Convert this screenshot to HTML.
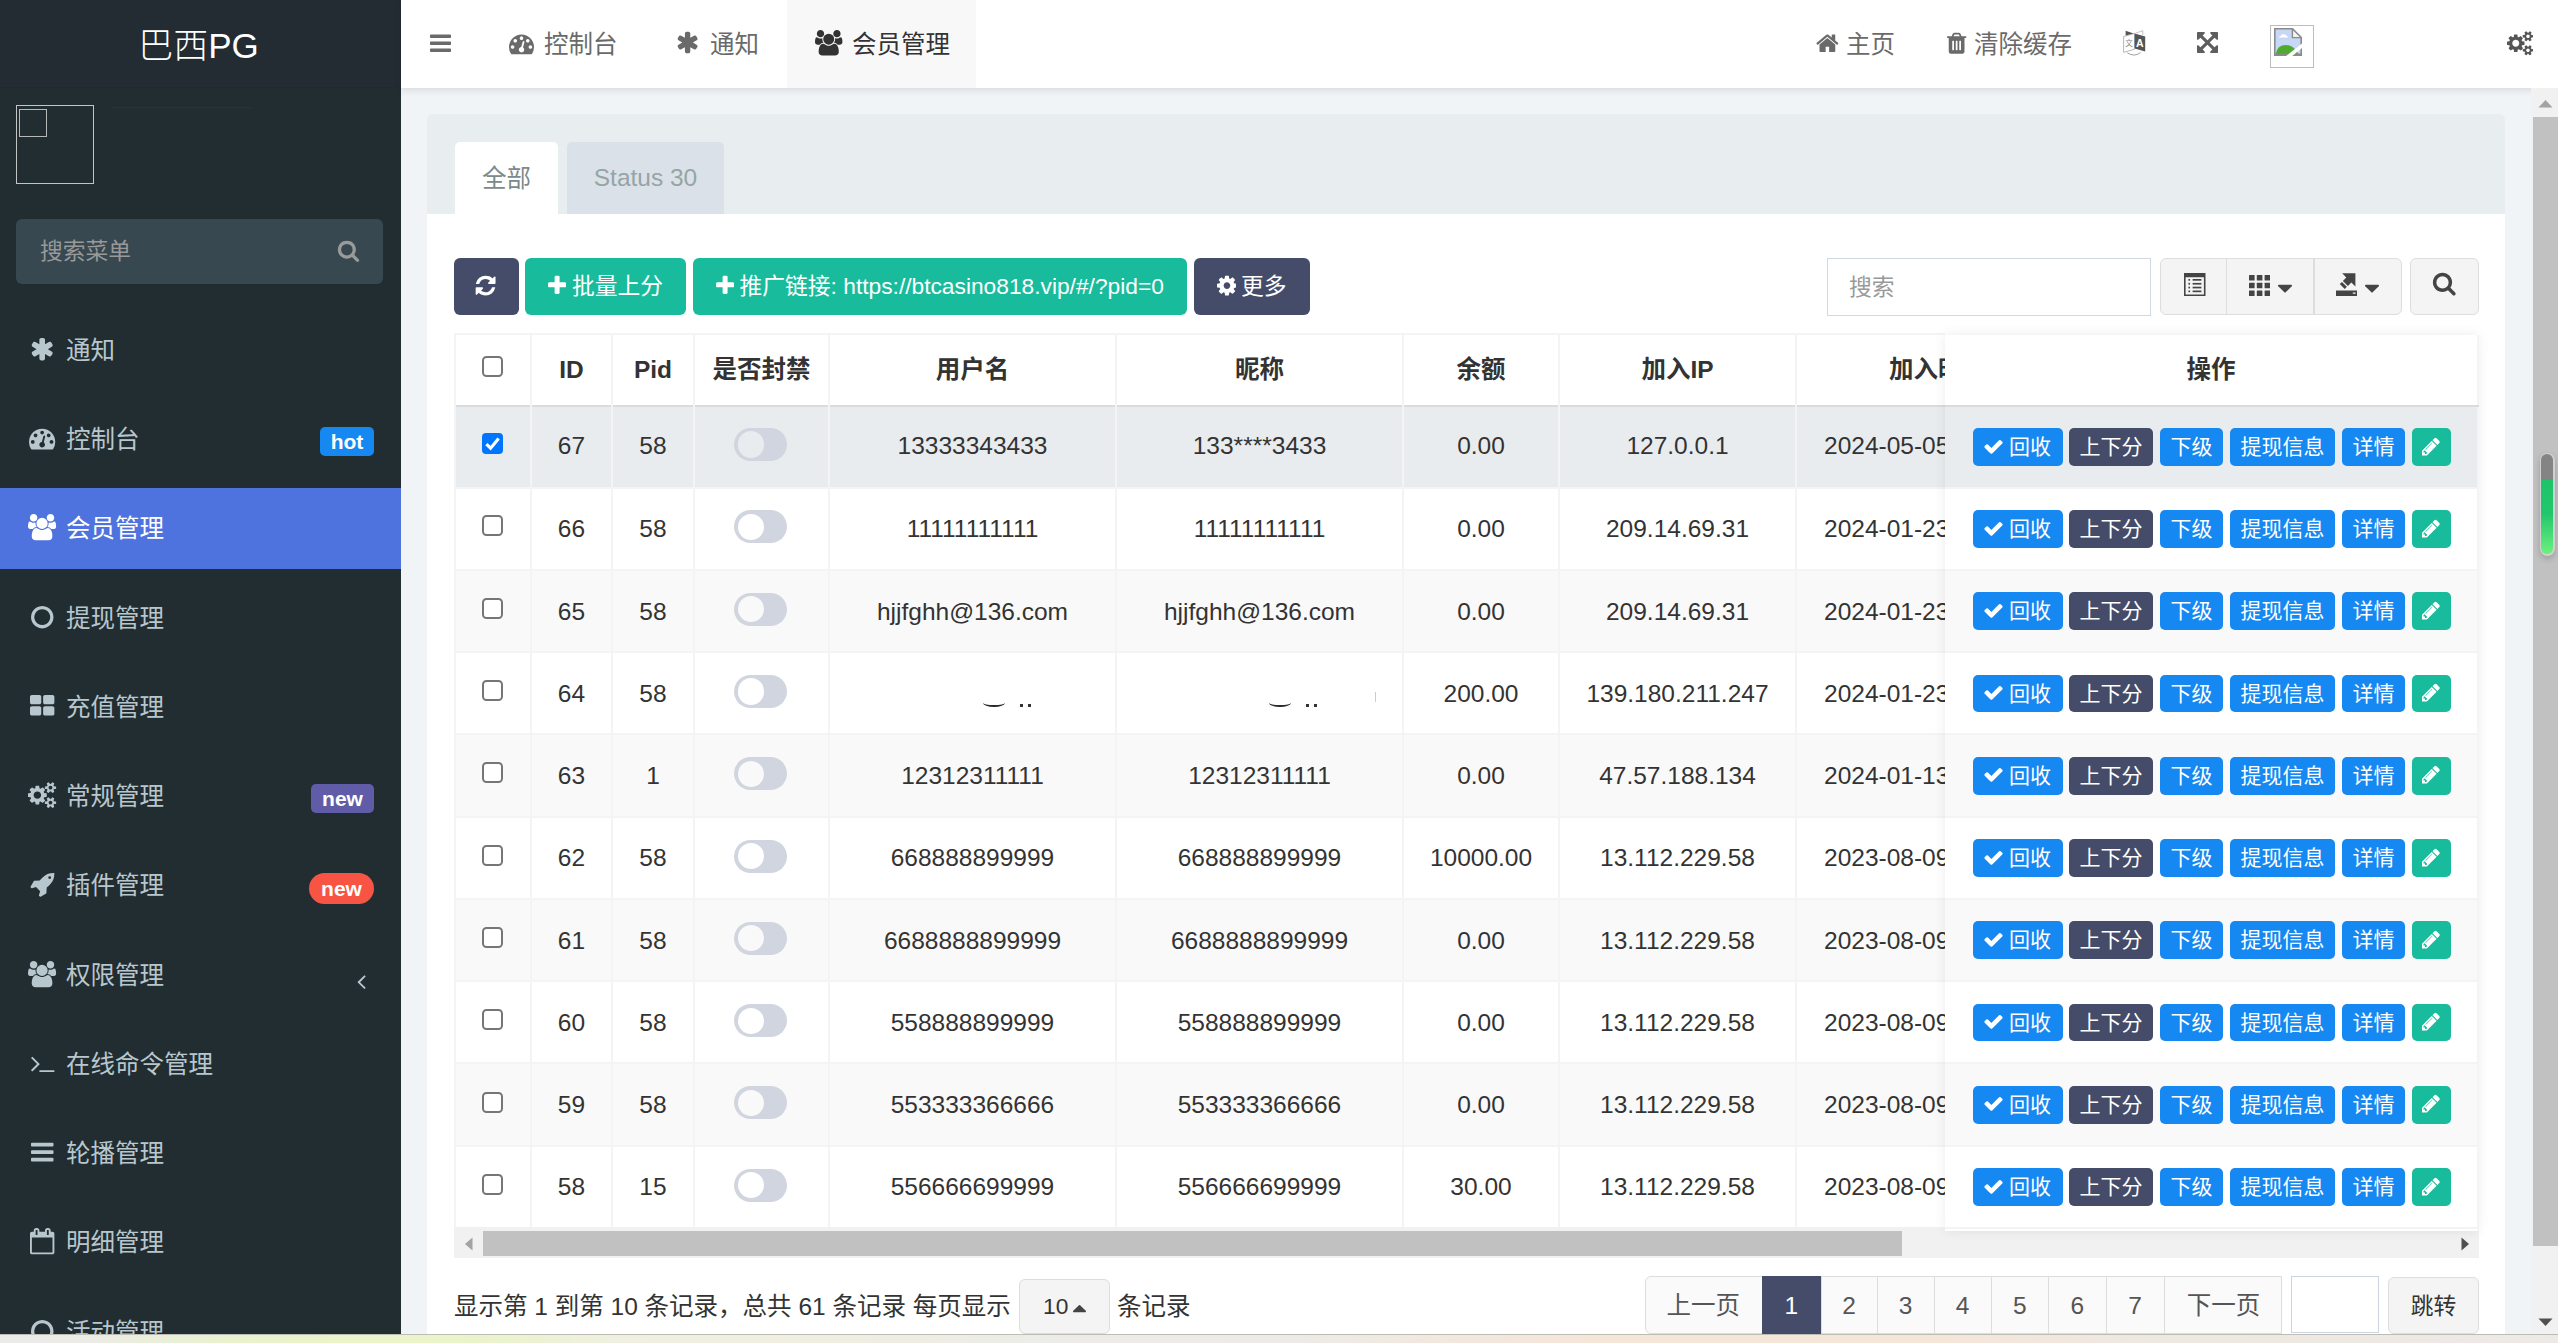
<!DOCTYPE html>
<html lang="zh-CN">
<head>
<meta charset="utf-8">
<title>巴西PG</title>
<style>
*{box-sizing:border-box;margin:0;padding:0}
html,body{width:2558px;height:1343px;overflow:hidden;background:#f1f4f6}
body{position:relative;font-family:"Liberation Sans","Noto Sans CJK SC",sans-serif;font-size:24.5px;color:#333;line-height:1}
.abs{position:absolute}
svg{display:block}
/* ---------- sidebar ---------- */
#sidebar{position:absolute;left:0;top:0;width:401px;height:1334px;background:#222d32;overflow:hidden}
#logo{position:absolute;left:0;top:0;width:397px;height:88px;background:#222c32;color:#fff;font-size:35px;font-weight:300;text-align:center;line-height:91px;padding-right:0;border-bottom:1px solid #20292f}
#uimg{position:absolute;left:16px;top:105px;width:78px;height:79px;border:1.5px solid #c4c4c4}
#uimg i{position:absolute;left:2px;top:3px;width:28px;height:28px;border:1.5px solid #b8b8b8;display:block}
#sline{position:absolute;left:112px;top:107px;width:140px;height:1px;background:#273339}
#msearch{position:absolute;left:16px;top:219px;width:367px;height:65px;background:#374850;border-radius:6px;color:#999;font-size:22.75px;line-height:65px;padding-left:24px}
#msearch svg{position:absolute;left:321px;top:20.4px}
.mi{position:absolute;left:0;width:401px;height:81px;color:#b8c7ce;font-size:24.5px;line-height:81px}
.mi.on{background:#4e73df;color:#fff}
.mi .ic{position:absolute;left:0;top:0;width:82px;height:81px}
.mi .ic svg{position:absolute}
.mi .tx{position:absolute;left:66px;top:0.5px;white-space:nowrap}
.lab{position:absolute;height:29px;line-height:29px;border-radius:5px;color:#fff;font-weight:bold;font-size:21px;text-align:center}
/* ---------- header ---------- */
#header{position:absolute;left:401px;top:0;width:2157px;height:88px;background:#fff;box-shadow:0 2px 7px rgba(0,21,41,.12)}
.nt{position:absolute;top:0;height:88px;color:#6a6a6a;font-size:24.5px;line-height:89.5px;white-space:nowrap}
.nt svg{position:absolute}
/* ---------- content ---------- */
#panel{position:absolute;left:427px;top:114px;width:2078px;height:1230px;background:#fff;border-radius:5px 5px 0 0}
#phead{position:absolute;left:0;top:0;width:2078px;height:100px;background:#e8edf0;border-radius:5px 5px 0 0}
.tab{position:absolute;top:28px;height:72px;border-radius:5px 5px 0 0;font-size:24.5px;line-height:70px;text-align:center}
.btn{position:absolute;border-radius:6px;color:#fff;white-space:nowrap}
.tb{top:144px;height:57px;line-height:56px;font-size:22.75px}
.tb svg{position:absolute}
.gbtn{position:absolute;background:#f4f4f4;border:1.5px solid #ddd}
.th,.td{position:absolute;height:40px;line-height:40px;text-align:center;white-space:nowrap}
.th{font-weight:bold}
.rb{position:absolute;height:37.8px;line-height:38.2px;border-radius:5px;color:#fff;text-align:center;white-space:nowrap;font-size:21px}
</style>
</head>
<body>
<div id="sidebar">
<div id="logo">巴西PG</div>
<div id="uimg"><i></i></div><div id="sline"></div>
<div id="msearch">搜索菜单<svg width="21.36" height="23.00" viewBox="0 0 1664 1792" style="overflow:visible"><path fill="#9a9a9a" fill-rule="evenodd" d="M1216 832q0-185-131.500-316.500t-316.500-131.500-316.500 131.500-131.500 316.500 131.500 316.500 316.500 131.500 316.500-131.500 131.500-316.500zM1728 1664q0 52-38 90t-90 38q-54 0-90-38l-343-342q-179 124-399 124-143 0-273.500-55.500t-225-150-150-225-55.500-273.500 55.500-273.500 150-225 225-150 273.500-55.500 273.500 55.500 225 150 150 225 55.500 273.500q0 220-124 399l343 343q37 37 37 90z"/></svg></div>
<div class="mi" style="top:309.30px"><span class="ic"><svg width="24.38" height="26.25" viewBox="0 0 1664 1792" style="left:30.01px;top:26.6px;overflow:visible"><path fill="#b8c7ce" fill-rule="evenodd" d="M1482 1050q46 26 59.500 77.500t-12.500 97.500l-64 110q-26 46-77.500 59.500t-97.500-12.500l-266-153v307q0 52-38 90t-90 38h-128q-52 0-90-38t-38-90v-307l-266 153q-46 26-97.500 12.500t-77.500-59.500l-64-110q-26-46-12.500-97.500t59.500-77.500l266-154-266-154q-46-26-59.500-77.500t12.500-97.500l64-110q26-46 77.500-59.500t97.500 12.500l266 153v-307q0-52 38-90t90-38h128q52 0 90 38t38 90v307l266-153q46-26 97.500-12.500t77.500 59.500l64 110q26 46 12.500 97.500t-59.500 77.500l-266 154z"/></svg></span><span class="tx">通知</span></div>
<div class="mi" style="top:398.55px"><span class="ic"><svg width="26.25" height="26.25" viewBox="0 0 1792 1792" style="left:29.08px;top:26.6px;overflow:visible"><path fill="#b8c7ce" fill-rule="evenodd" d="M384 1152q0-53-37.500-90.500t-90.500-37.500-90.500 37.500-37.500 90.500 37.500 90.500 90.500 37.500 90.500-37.500 37.500-90.500zM576 704q0-53-37.500-90.500t-90.500-37.500-90.500 37.500-37.500 90.500 37.500 90.500 90.500 37.500 90.500-37.500 37.500-90.500zM1004 1185l101-382q6-26-7.500-48.500t-38.500-29.500-48 6.500-30 39.500l-101 382q-60 5-107 43.500t-63 98.500q-20 77 20 146t117 89 146-20 89-117q16-60-6-117t-72-91zM1664 1152q0-53-37.500-90.500t-90.500-37.500-90.500 37.500-37.500 90.500 37.500 90.500 90.500 37.500 90.500-37.500 37.500-90.500zM1024 512q0-53-37.500-90.500t-90.500-37.500-90.500 37.500-37.500 90.500 37.500 90.500 90.500 37.500 90.500-37.500 37.500-90.500zM1472 704q0-53-37.500-90.500t-90.500-37.500-90.500 37.500-37.500 90.500 37.500 90.500 90.500 37.500 90.500-37.500 37.500-90.500zM1792 1152q0 261-141 483-19 29-54 29h-1402q-35 0-54-29-141-221-141-483 0-182 71-348t191-286 286-191 348-71 348 71 286 191 191 286 71 348z"/></svg></span><span class="tx">控制台</span><span class="lab" style="left:320px;top:28px;width:54px;background:#1688f1">hot</span></div>
<div class="mi on" style="top:487.80px"><span class="ic"><svg width="28.12" height="26.25" viewBox="0 0 1920 1792" style="left:28.14px;top:26.6px;overflow:visible"><path fill="#fff" fill-rule="evenodd" d="M593 896q-162 5-265 128h-134q-82 0-138-40.500t-56-118.500q0-353 124-353 6 0 43.500 21t97.500 42.500 119 21.500q67 0 133-23-5 37-5 66 0 139 81 256zM1664 1533q0 120-73 189.500t-194 69.500h-874q-121 0-194-69.500t-73-189.500q0-53 3.500-103.500t14-109 26.500-108.500 43-97.500 62-81 85.500-53.500 111.500-20q10 0 43 21.500t73 48 107 48 135 21.500 135-21.500 107-48 73-48 43-21.500q61 0 111.500 20t85.500 53.500 62 81 43 97.500 26.500 108.500 14 109 3.500 103.500zM640 256q0 106-75 181t-181 75-181-75-75-181 75-181 181-75 181 75 75 181zM1344 640q0 159-112.500 271.500t-271.500 112.500-271.500-112.500-112.500-271.500 112.500-271.500 271.500-112.500 271.500 112.500 112.500 271.500zM1920 865q0 78-56 118.500t-138 40.500h-134q-103-123-265-128 81-117 81-256 0-29-5-66 66 23 133 23 59 0 119-21.500t97.500-42.500 43.500-21q124 0 124 353zM1792 256q0 106-75 181t-181 75-181-75-75-181 75-181 181-75 181 75 75 181z"/></svg></span><span class="tx">会员管理</span></div>
<div class="mi" style="top:577.05px"><span class="ic"><svg width="22.50" height="26.25" viewBox="0 0 1536 1792" style="left:30.95px;top:26.6px;overflow:visible"><path fill="#b8c7ce" fill-rule="evenodd" d="M768 352q-148 0-273 73t-198 198-73 273 73 273 198 198 273 73 273-73 198-198 73-273-73-273-198-198-273-73zM1536 896q0 209-103 385.500t-279.500 279.500-385.500 103-385.500-103-279.500-279.500-103-385.500 103-385.500 279.500-279.500 385.500-103 385.500 103 279.500 279.500 103 385.500z"/></svg></span><span class="tx">提现管理</span></div>
<div class="mi" style="top:666.30px"><span class="ic"><svg width="24.38" height="26.25" viewBox="0 0 1664 1792" style="left:30.01px;top:26.6px;overflow:visible"><path fill="#b8c7ce" fill-rule="evenodd" d="M768 1024v384q0 52-38 90t-90 38h-512q-52 0-90-38t-38-90v-384q0-52 38-90t90-38h512q52 0 90 38t38 90zM768 256v384q0 52-38 90t-90 38h-512q-52 0-90-38t-38-90v-384q0-52 38-90t90-38h512q52 0 90 38t38 90zM1664 1024v384q0 52-38 90t-90 38h-512q-52 0-90-38t-38-90v-384q0-52 38-90t90-38h512q52 0 90 38t38 90zM1664 256v384q0 52-38 90t-90 38h-512q-52 0-90-38t-38-90v-384q0-52 38-90t90-38h512q52 0 90 38t38 90z"/></svg></span><span class="tx">充值管理</span></div>
<div class="mi" style="top:755.55px"><span class="ic"><svg width="28.12" height="26.25" viewBox="0 0 1920 1792" style="left:28.14px;top:26.6px;overflow:visible"><path fill="#b8c7ce" fill-rule="evenodd" d="M896 896q0-106-75-181t-181-75-181 75-75 181 75 181 181 75 181-75 75-181zM1664 1408q0-52-38-90t-90-38-90 38-38 90q0 53 37.500 90.500t90.500 37.500 90.500-37.500 37.500-90.500zM1664 384q0-52-38-90t-90-38-90 38-38 90q0 53 37.500 90.500t90.500 37.500 90.500-37.500 37.500-90.500zM1280 805v185q0 10-7 19.500t-16 10.500l-155 24q-11 35-32 76 34 48 90 115 7 11 7 20 0 12-7 19-23 30-82.500 89.500t-78.500 59.500q-11 0-21-7l-115-90q-37 19-77 31-11 108-23 155-7 24-30 24h-186q-11 0-20-7.500t-10-17.500l-23-153q-34-10-75-31l-118 89q-7 7-20 7-11 0-21-8-144-133-144-160 0-9 7-19 10-14 41-53t47-61q-23-44-35-82l-152-24q-10-1-17-9.500t-7-19.500v-185q0-10 7-19.500t16-10.500l155-24q11-35 32-76-34-48-90-115-7-11-7-20 0-12 7-20 22-30 82-89t79-59q11 0 21 7l115 90q34-18 77-32 11-108 23-154 7-24 30-24h186q11 0 20 7.500t10 17.500l23 153q34 10 75 31l118-89q8-7 20-7 11 0 21 8 144 133 144 160 0 8-7 19-12 16-42 54t-45 60q23 48 34 82l152 23q10 2 17 10.500t7 19.500zM1920 1338v140q0 16-149 31-12 27-30 52 51 113 51 138 0 4-4 7-122 71-124 71-8 0-46-47t-52-68q-20 2-30 2t-30-2q-14 21-52 68t-46 47q-2 0-124-71-4-3-4-7 0-25 51-138-18-25-30-52-149-15-149-31v-140q0-16 149-31 13-29 30-52-51-113-51-138 0-4 4-7 4-2 35-20t59-34 30-16q8 0 46 46.500t52 67.500q20-2 30-2t30 2q51-71 92-112l6-2q4 0 124 70 4 3 4 7 0 25-51 138 17 23 30 52 149 15 149 31zM1920 314v140q0 16-149 31-12 27-30 52 51 113 51 138 0 4-4 7-122 71-124 71-8 0-46-47t-52-68q-20 2-30 2t-30-2q-14 21-52 68t-46 47q-2 0-124-71-4-3-4-7 0-25 51-138-18-25-30-52-149-15-149-31v-140q0-16 149-31 13-29 30-52-51-113-51-138 0-4 4-7 4-2 35-20t59-34 30-16q8 0 46 46.500t52 67.500q20-2 30-2t30 2q51-71 92-112l6-2q4 0 124 70 4 3 4 7 0 25-51 138 17 23 30 52 149 15 149 31z"/></svg></span><span class="tx">常规管理</span><span class="lab" style="left:311px;top:28.5px;width:63px;background:#605ca8">new</span></div>
<div class="mi" style="top:844.80px"><span class="ic"><svg width="24.38" height="26.25" viewBox="0 0 1664 1792" style="left:30.01px;top:26.6px;overflow:visible"><path fill="#b8c7ce" fill-rule="evenodd" d="M1440 448q0-40-28-68t-68-28-68 28-28 68 28 68 68 28 68-28 28-68zM1664 160q0 249-75.500 430.500t-253.500 360.500q-81 80-195 176l-20 379q-2 16-16 26l-384 224q-7 4-16 4-12 0-23-9l-64-64q-13-14-8-32l85-276-281-281-276 85q-3 1-9 1-14 0-23-9l-64-64q-17-19-5-39l224-384q10-14 26-16l379-20q96-114 176-195 188-187 358-258t431-71q14 0 24 9.500t10 22.500z"/></svg></span><span class="tx">插件管理</span><span class="lab" style="left:309px;top:28.5px;width:65px;height:31px;line-height:31px;border-radius:16px;background:#f75444">new</span></div>
<div class="mi" style="top:934.05px"><span class="ic"><svg width="28.12" height="26.25" viewBox="0 0 1920 1792" style="left:28.14px;top:26.6px;overflow:visible"><path fill="#b8c7ce" fill-rule="evenodd" d="M593 896q-162 5-265 128h-134q-82 0-138-40.500t-56-118.500q0-353 124-353 6 0 43.500 21t97.500 42.500 119 21.500q67 0 133-23-5 37-5 66 0 139 81 256zM1664 1533q0 120-73 189.500t-194 69.500h-874q-121 0-194-69.500t-73-189.500q0-53 3.500-103.500t14-109 26.500-108.500 43-97.500 62-81 85.500-53.500 111.500-20q10 0 43 21.500t73 48 107 48 135 21.500 135-21.500 107-48 73-48 43-21.500q61 0 111.500 20t85.500 53.500 62 81 43 97.500 26.500 108.500 14 109 3.500 103.500zM640 256q0 106-75 181t-181 75-181-75-75-181 75-181 181-75 181 75 75 181zM1344 640q0 159-112.500 271.500t-271.500 112.500-271.500-112.500-112.500-271.500 112.500-271.500 271.500-112.500 271.500 112.500 112.500 271.500zM1920 865q0 78-56 118.500t-138 40.500h-134q-103-123-265-128 81-117 81-256 0-29-5-66 66 23 133 23 59 0 119-21.500t97.500-42.500 43.500-21q124 0 124 353zM1792 256q0 106-75 181t-181 75-181-75-75-181 75-181 181-75 181 75 75 181z"/></svg></span><span class="tx">权限管理</span><svg width="8.75" height="24.50" viewBox="0 0 640 1792" style="position:absolute;left:357px;top:35px"><path fill="#b8c7ce" fill-rule="evenodd" d="M627 544q0 13-10 23l-393 393 393 393q10 10 10 23t-10 23l-50 50q-10 10-23 10t-23-10l-466-466q-10-10-10-23t10-23l466-466q10-10 23-10t23 10l50 50q10 10 10 23z"/></svg></div>
<div class="mi" style="top:1023.30px"><span class="ic"><svg width="24.38" height="26.25" viewBox="0 0 1664 1792" style="left:30.01px;top:26.6px;overflow:visible"><path fill="#b8c7ce" fill-rule="evenodd" d="M649 983l-466 466q-10 10-23 10t-23-10l-50-50q-10-10-10-23t10-23l393-393-393-393q-10-10-10-23t10-23l50-50q10-10 23-10t23 10l466 466q10 10 10 23t-10 23zM1664 1408v64q0 14-9 23t-23 9h-960q-14 0-23-9t-9-23v-64q0-14 9-23t23-9h960q14 0 23 9t9 23z"/></svg></span><span class="tx">在线命令管理</span></div>
<div class="mi" style="top:1112.55px"><span class="ic"><svg width="22.50" height="26.25" viewBox="0 0 1536 1792" style="left:30.95px;top:26.6px;overflow:visible"><path fill="#b8c7ce" fill-rule="evenodd" d="M1536 1344v128q0 26-19 45t-45 19h-1408q-26 0-45-19t-19-45v-128q0-26 19-45t45-19h1408q26 0 45 19t19 45zM1536 832v128q0 26-19 45t-45 19h-1408q-26 0-45-19t-19-45v-128q0-26 19-45t45-19h1408q26 0 45 19t19 45zM1536 320v128q0 26-19 45t-45 19h-1408q-26 0-45-19t-19-45v-128q0-26 19-45t45-19h1408q26 0 45 19t19 45z"/></svg></span><span class="tx">轮播管理</span></div>
<div class="mi" style="top:1201.80px"><span class="ic"><svg width="24.38" height="26.25" viewBox="0 0 1664 1792" style="left:30.01px;top:26.6px;overflow:visible"><path fill="#b8c7ce" fill-rule="evenodd" d="M128 1664h1408v-1024h-1408v1024zM512 448v-288q0-14-9-23t-23-9h-64q-14 0-23 9t-9 23v288q0 14 9 23t23 9h64q14 0 23-9t9-23zM1280 448v-288q0-14-9-23t-23-9h-64q-14 0-23 9t-9 23v288q0 14 9 23t23 9h64q14 0 23-9t9-23zM1664 384v1280q0 52-38 90t-90 38h-1408q-52 0-90-38t-38-90v-1280q0-52 38-90t90-38h128v-96q0-66 47-113t113-47h64q66 0 113 47t47 113v96h384v-96q0-66 47-113t113-47h64q66 0 113 47t47 113v96h128q52 0 90 38t38 90z"/></svg></span><span class="tx">明细管理</span></div>
<div class="mi" style="top:1291.05px"><span class="ic"><svg width="22.50" height="26.25" viewBox="0 0 1536 1792" style="left:30.95px;top:26.6px;overflow:visible"><path fill="#b8c7ce" fill-rule="evenodd" d="M768 352q-148 0-273 73t-198 198-73 273 73 273 198 198 273 73 273-73 198-198 73-273-73-273-198-198-273-73zM1536 896q0 209-103 385.500t-279.500 279.500-385.500 103-385.500-103-279.500-279.500-103-385.500 103-385.500 279.500-279.500 385.500-103 385.500 103 279.500 279.500 103 385.500z"/></svg></span><span class="tx">活动管理</span></div>
</div>

<div id="header">
<div class="nt" style="left:0;width:80px"><svg width="21.00" height="24.50" viewBox="0 0 1536 1792" style="left:28.5px;top:31px"><path fill="#6a6a6a" fill-rule="evenodd" d="M1536 1344v128q0 26-19 45t-45 19h-1408q-26 0-45-19t-19-45v-128q0-26 19-45t45-19h1408q26 0 45 19t19 45zM1536 832v128q0 26-19 45t-45 19h-1408q-26 0-45-19t-19-45v-128q0-26 19-45t45-19h1408q26 0 45 19t19 45zM1536 320v128q0 26-19 45t-45 19h-1408q-26 0-45-19t-19-45v-128q0-26 19-45t45-19h1408q26 0 45 19t19 45z"/></svg></div>
<div class="nt" style="left:79px"><svg width="25.00" height="25.00" viewBox="0 0 1792 1792" style="left:28.8px;top:30.8px"><path fill="#6a6a6a" fill-rule="evenodd" d="M384 1152q0-53-37.500-90.500t-90.500-37.500-90.500 37.500-37.500 90.500 37.500 90.500 90.500 37.500 90.500-37.500 37.500-90.500zM576 704q0-53-37.500-90.500t-90.500-37.500-90.500 37.500-37.500 90.500 37.500 90.500 90.500 37.500 90.500-37.500 37.500-90.500zM1004 1185l101-382q6-26-7.500-48.500t-38.500-29.500-48 6.500-30 39.500l-101 382q-60 5-107 43.500t-63 98.500q-20 77 20 146t117 89 146-20 89-117q16-60-6-117t-72-91zM1664 1152q0-53-37.500-90.500t-90.500-37.500-90.500 37.500-37.500 90.500 37.500 90.500 90.500 37.500 90.500-37.500 37.500-90.500zM1024 512q0-53-37.500-90.500t-90.500-37.500-90.500 37.500-37.500 90.500 37.500 90.500 90.500 37.500 90.500-37.500 37.500-90.500zM1472 704q0-53-37.500-90.500t-90.500-37.500-90.500 37.500-37.500 90.500 37.500 90.500 90.500 37.500 90.500-37.500 37.500-90.500zM1792 1152q0 261-141 483-19 29-54 29h-1402q-35 0-54-29-141-221-141-483 0-182 71-348t191-286 286-191 348-71 348 71 286 191 191 286 71 348z"/></svg><span style="position:absolute;left:64px">控制台</span></div>
<div class="nt" style="left:249px"><svg width="23.21" height="25.00" viewBox="0 0 1664 1792" style="left:25.8px;top:29.8px"><path fill="#6a6a6a" fill-rule="evenodd" d="M1482 1050q46 26 59.500 77.500t-12.500 97.500l-64 110q-26 46-77.500 59.500t-97.500-12.500l-266-153v307q0 52-38 90t-90 38h-128q-52 0-90-38t-38-90v-307l-266 153q-46 26-97.500 12.500t-77.500-59.500l-64-110q-26-46-12.500-97.500t59.500-77.500l266-154-266-154q-46-26-59.500-77.500t12.500-97.500l64-110q26-46 77.500-59.500t97.500 12.500l266 153v-307q0-52 38-90t90-38h128q52 0 90 38t38 90v307l266-153q46-26 97.500-12.500t77.500 59.500l64 110q26 46 12.500 97.500t-59.500 77.500l-266 154z"/></svg><span style="position:absolute;left:60px">通知</span></div>
<div class="nt" style="left:386px;width:189px;background:#f8f8f8;color:#333"><svg width="27.43" height="25.60" viewBox="0 0 1920 1792" style="left:28.4px;top:30.1px"><path fill="#333" fill-rule="evenodd" d="M593 896q-162 5-265 128h-134q-82 0-138-40.500t-56-118.500q0-353 124-353 6 0 43.500 21t97.500 42.500 119 21.500q67 0 133-23-5 37-5 66 0 139 81 256zM1664 1533q0 120-73 189.500t-194 69.500h-874q-121 0-194-69.500t-73-189.500q0-53 3.500-103.500t14-109 26.500-108.500 43-97.500 62-81 85.500-53.500 111.500-20q10 0 43 21.500t73 48 107 48 135 21.500 135-21.500 107-48 73-48 43-21.500q61 0 111.500 20t85.500 53.500 62 81 43 97.500 26.500 108.500 14 109 3.500 103.500zM640 256q0 106-75 181t-181 75-181-75-75-181 75-181 181-75 181 75 75 181zM1344 640q0 159-112.500 271.500t-271.500 112.500-271.500-112.500-112.500-271.500 112.500-271.500 271.500-112.500 271.500 112.500 112.500 271.500zM1920 865q0 78-56 118.500t-138 40.500h-134q-103-123-265-128 81-117 81-256 0-29-5-66 66 23 133 23 59 0 119-21.500t97.500-42.500 43.500-21q124 0 124 353zM1792 256q0 106-75 181t-181 75-181-75-75-181 75-181 181-75 181 75 75 181z"/></svg><span style="position:absolute;left:65px">会员管理</span></div>
<div class="nt" style="left:1399px"><svg width="22.75" height="24.50" viewBox="0 0 1664 1792" style="left:16px;top:31px;overflow:visible"><path fill="#6a6a6a" fill-rule="evenodd" d="M1408 992v480q0 26-19 45t-45 19h-384v-384h-256v384h-384q-26 0-45-19t-19-45v-480q0-1 .5-3t.5-3l575-474 575 474q1 2 1 6zM1631 923l-62 74q-8 9-21 11h-3q-13 0-21-7l-692-577-692 577q-12 8-24 7-13-2-21-11l-62-74q-8-10-7-23.500t11-21.500l719-599q32-26 76-26t76 26l244 204v-195q0-14 9-23t23-9h192q14 0 23 9t9 23v408l219 182q10 8 11 21.500t-7 23.500z"/></svg><span style="position:absolute;left:46px">主页</span></div>
<div class="nt" style="left:1529px"><svg width="19.25" height="24.50" viewBox="0 0 1408 1792" style="overflow:visible;position:absolute;left:17px;top:30.9px"><path fill="#6a6a6a" fill-rule="evenodd" d="M32 384H1376Q1408 384 1408 416V480Q1408 512 1376 512H1280V1460Q1280 1664 1120 1664H288Q128 1664 128 1460V512H32Q0 512 0 480V416Q0 384 32 384ZM341 384L411 217Q450 128 555 128H853Q958 128 997 217L1067 384H928L880 267Q873 258 863 256H545Q535 258 528 267L480 384ZM416 704H480Q512 704 512 736V1376Q512 1408 480 1408H416Q384 1408 384 1376V736Q384 704 416 704ZM672 704H736Q768 704 768 736V1376Q768 1408 736 1408H672Q640 1408 640 1376V736Q640 704 672 704ZM928 704H992Q1024 704 1024 736V1376Q1024 1408 992 1408H928Q896 1408 896 1376V736Q896 704 928 704Z"/></svg><span style="position:absolute;left:44px">清除缓存</span></div>
<div class="nt" style="left:1721px"><svg width="24" height="27" viewBox="0 0 24 27" style="overflow:visible;left:0.5px;top:30px"><path d="M0.6 6.6L11.6 3.4V19.2L0.6 22.4Z" fill="#fff" stroke="#9a9a9a" stroke-width="0.7"/><path d="M11.6 3.4L22.2 6.6V21.4L11.6 18.4Z" fill="#555"/><path d="M2.6 0.8L10.6 3.4L2.6 5.6Z" fill="#555"/><path d="M12.6 3.2L19.8 0.6V5.2" fill="none" stroke="#aaa" stroke-width="0.7"/><path d="M4.2 22.8Q11.4 27.4 17.6 22.6" fill="none" stroke="#888" stroke-width="0.8"/><text x="16.9" y="16.6" font-family="Liberation Sans,sans-serif" font-weight="bold" font-size="10.5" fill="#fff" text-anchor="middle">A</text><text x="6.1" y="16.2" font-family="Noto Sans CJK SC,sans-serif" font-size="7.6" fill="#888" text-anchor="middle">文</text></svg></div>
<div class="nt" style="left:1796px"><svg width="21.00" height="24.50" viewBox="0 0 1536 1792" style="left:0;top:32.3px"><path fill="#5e5e5e" fill-rule="evenodd" d="M1283 413l-355 355 355 355 144-144q29-31 70-14 39 17 39 59v448q0 26-19 45t-45 19h-448q-42 0-59-40-17-39 14-69l144-144-355-355-355 355 144 144q31 30 14 69-17 40-59 40h-448q-26 0-45-19t-19-45v-448q0-42 40-59 39-17 69 14l144 144 355-355-355-355-144 144q-19 19-45 19-12 0-24-5-40-17-40-59v-448q0-26 19-45t45-19h448q42 0 59 40 17 39-14 69l-144 144 355 355 355-355-144-144q-31-30-14-69 17-40 59-40h448q26 0 45 19t19 45v448q0 42-39 59-13 5-25 5-26 0-45-19z"/></svg></div>
<div style="position:absolute;left:1869px;top:25px;width:44px;height:43px;border:1.5px solid #bdbdbd"><svg width="28" height="28" viewBox="0 0 28 28" style="position:absolute;left:2.5px;top:1.7px"><path d="M0.8 0.8H18.4L27.2 9.6V27.2H0.8Z" fill="#c6d8f6" stroke="#8a8a8a" stroke-width="1.6"/><path d="M18.4 0.8V9.6H27.2Z" fill="#f4f4f4" stroke="#8a8a8a" stroke-width="1.4"/><path d="M5 9.6Q5 7.8 7 7.8Q8 5.4 10.4 6.4Q12.6 6.2 12.8 8.2Q14.2 8.4 14 9.6Z" fill="#fff"/><path d="M1.6 26.4Q3 17 12 17Q19.5 17 25 26.4Z" fill="#4faa2f"/><path d="M0.8 26.4H27.2" stroke="#8a8a8a" stroke-width="1.6"/><path d="M11.5 28.5L28.5 15.2V19.5L17.6 28.5Z" fill="#fff"/></svg></div>
<div class="nt" style="left:2106px"><svg width="26.25" height="24.50" viewBox="0 0 1920 1792" style="left:0;top:31px"><path fill="#555" fill-rule="evenodd" d="M896 896q0-106-75-181t-181-75-181 75-75 181 75 181 181 75 181-75 75-181zM1664 1408q0-52-38-90t-90-38-90 38-38 90q0 53 37.500 90.500t90.500 37.500 90.500-37.500 37.500-90.500zM1664 384q0-52-38-90t-90-38-90 38-38 90q0 53 37.500 90.500t90.500 37.500 90.500-37.500 37.500-90.500zM1280 805v185q0 10-7 19.500t-16 10.500l-155 24q-11 35-32 76 34 48 90 115 7 11 7 20 0 12-7 19-23 30-82.500 89.500t-78.500 59.500q-11 0-21-7l-115-90q-37 19-77 31-11 108-23 155-7 24-30 24h-186q-11 0-20-7.500t-10-17.500l-23-153q-34-10-75-31l-118 89q-7 7-20 7-11 0-21-8-144-133-144-160 0-9 7-19 10-14 41-53t47-61q-23-44-35-82l-152-24q-10-1-17-9.500t-7-19.500v-185q0-10 7-19.500t16-10.500l155-24q11-35 32-76-34-48-90-115-7-11-7-20 0-12 7-20 22-30 82-89t79-59q11 0 21 7l115 90q34-18 77-32 11-108 23-154 7-24 30-24h186q11 0 20 7.500t10 17.500l23 153q34 10 75 31l118-89q8-7 20-7 11 0 21 8 144 133 144 160 0 8-7 19-12 16-42 54t-45 60q23 48 34 82l152 23q10 2 17 10.500t7 19.500zM1920 1338v140q0 16-149 31-12 27-30 52 51 113 51 138 0 4-4 7-122 71-124 71-8 0-46-47t-52-68q-20 2-30 2t-30-2q-14 21-52 68t-46 47q-2 0-124-71-4-3-4-7 0-25 51-138-18-25-30-52-149-15-149-31v-140q0-16 149-31 13-29 30-52-51-113-51-138 0-4 4-7 4-2 35-20t59-34 30-16q8 0 46 46.500t52 67.500q20-2 30-2t30 2q51-71 92-112l6-2q4 0 124 70 4 3 4 7 0 25-51 138 17 23 30 52 149 15 149 31zM1920 314v140q0 16-149 31-12 27-30 52 51 113 51 138 0 4-4 7-122 71-124 71-8 0-46-47t-52-68q-20 2-30 2t-30-2q-14 21-52 68t-46 47q-2 0-124-71-4-3-4-7 0-25 51-138-18-25-30-52-149-15-149-31v-140q0-16 149-31 13-29 30-52-51-113-51-138 0-4 4-7 4-2 35-20t59-34 30-16q8 0 46 46.500t52 67.500q20-2 30-2t30 2q51-71 92-112l6-2q4 0 124 70 4 3 4 7 0 25-51 138 17 23 30 52 149 15 149 31z"/></svg></div>
</div>

<div id="panel">
<div id="phead"></div>
<div class="tab" style="left:28px;width:103px;background:#fff;color:#7b8a8b;line-height:73px">全部</div>
<div class="tab" style="left:140px;width:157px;background:#dbe1e8;color:#95a5a6;line-height:71px">Status 30</div>
<div class="btn tb" style="left:27px;width:65px;background:#444c69"><svg width="19.89" height="23.20" viewBox="0 0 1536 1792" style="left:20.4px;top:16.3px;overflow:visible"><path fill="#fff" fill-rule="evenodd" d="M1639 1056q0 5-1 7-64 268-268 434.500t-478 166.500q-146 0-282.500-55t-243.500-157l-129 129q-19 19-45 19t-45-19-19-45v-448q0-26 19-45t45-19h448q26 0 45 19t19 45-19 45l-137 137q71 66 161 102t187 36q134 0 250-65t186-179q11-17 53-117 8-23 30-23h192q13 0 22.500 9.500t9.500 22.500zM1664 256v448q0 26-19 45t-45 19h-448q-26 0-45-19t-19-45 19-45l138-138q-148-137-349-137-134 0-250 65t-186 179q-11 17-53 117-8 23-30 23h-199q-13 0-22.500-9.500t-9.500-22.500v-7q65-268 270-434.500t480-166.500q146 0 284 55.500t245 156.500l130-129q19-19 45-19t45 19 19 45z"/></svg></div>
<div class="btn tb" style="left:98px;width:161px;background:#18bc9c"><svg width="18.23" height="23.20" viewBox="0 0 1408 1792" style="left:23px;top:16.2px"><path fill="#fff" fill-rule="evenodd" d="M1408 736v192q0 40-28 68t-68 28h-416v416q0 40-28 68t-68 28h-192q-40 0-68-28t-28-68v-416h-416q-40 0-68-28t-28-68v-192q0-40 28-68t68-28h416v-416q0-40 28-68t68-28h192q40 0 68 28t28 68v416h416q40 0 68 28t28 68z"/></svg><span style="position:absolute;left:47px">批量上分</span></div>
<div class="btn tb" style="left:266px;width:494px;background:#18bc9c"><svg width="18.23" height="23.20" viewBox="0 0 1408 1792" style="left:23px;top:16.2px"><path fill="#fff" fill-rule="evenodd" d="M1408 736v192q0 40-28 68t-68 28h-416v416q0 40-28 68t-68 28h-192q-40 0-68-28t-28-68v-416h-416q-40 0-68-28t-28-68v-192q0-40 28-68t68-28h416v-416q0-40 28-68t68-28h192q40 0 68 28t28 68v416h416q40 0 68 28t28 68z"/></svg><span style="position:absolute;left:46.6px">推广链接: https://btcasino818.vip/#/?pid=0</span></div>
<div class="btn tb" style="left:767px;width:116px;background:#444c69"><svg width="19.89" height="23.20" viewBox="0 0 1536 1792" style="left:22.5px;top:16.3px"><path fill="#fff" fill-rule="evenodd" d="M1024 896q0-106-75-181t-181-75-181 75-75 181 75 181 181 75 181-75 75-181zM1536 787v222q0 12-8 23t-20 13l-185 28q-19 54-39 91 35 50 107 138 10 12 10 25t-9 23q-27 37-99 108t-94 71q-12 0-26-9l-138-108q-44 23-91 38-16 136-29 186-7 28-36 28h-222q-14 0-24.500-8.500t-11.500-21.500l-28-184q-49-16-90-37l-141 107q-10 9-25 9-14 0-25-11-126-114-165-168-7-10-7-23 0-12 8-23 15-21 51-66.500t54-70.500q-27-50-41-99l-183-27q-13-2-21-12.500t-8-23.500v-222q0-12 8-23t19-13l186-28q14-46 39-92-40-57-107-138-10-12-10-24 0-10 9-23 26-36 98.500-107.500t94.500-71.500q13 0 26 10l138 107q44-23 91-38 16-136 29-186 7-28 36-28h222q14 0 24.500 8.500t11.500 21.500l28 184q49 16 90 37l142-107q9-9 24-9 13 0 25 10 129 119 165 170 7 8 7 22 0 12-8 23-15 21-51 66.500t-54 70.500q26 50 41 98l183 28q13 2 21 12.500t8 23.500z"/></svg><span style="position:absolute;left:47px">更多</span></div>
<div style="position:absolute;left:1400px;top:144px;width:324px;height:58px;border:1.5px solid #d2d9e0;background:#fff;color:#999;font-size:22.75px;line-height:56px;padding-left:21px">搜索</div>
<div class="gbtn" style="left:1733px;top:144.0px;width:241.5px;height:57px;border-radius:6px"></div>
<div style="position:absolute;left:1798.6px;top:144.5px;width:1.5px;height:56px;background:#ddd"></div><div style="position:absolute;left:1886.0px;top:144.5px;width:1.5px;height:56px;background:#ddd"></div>
<svg width="21.5" height="23" viewBox="0 0 21.5 23" style="position:absolute;left:1757.0px;top:159.0px"><path fill="#444" fill-rule="evenodd" d="M0 0H21.5V23H0ZM1.6 4.2V21.4H19.9V4.2Z"/><rect x="4.4" y="6.0" width="1.7" height="1.7" fill="#444"/><rect x="8.6" y="6.0" width="8.8" height="1.7" fill="#444"/><rect x="4.4" y="9.9" width="1.7" height="1.7" fill="#444"/><rect x="8.6" y="9.9" width="8.8" height="1.7" fill="#444"/><rect x="4.4" y="13.7" width="1.7" height="1.7" fill="#444"/><rect x="8.6" y="13.7" width="8.8" height="1.7" fill="#444"/><rect x="4.4" y="17.5" width="1.7" height="1.7" fill="#444"/><rect x="8.6" y="17.5" width="8.8" height="1.7" fill="#444"/></svg><svg width="21.6" height="21" viewBox="0 0 21.6 21" style="position:absolute;left:1821.5px;top:161.0px"><rect x="0.00" y="0.00" width="5.6" height="5.5" rx="0.5" fill="#444"/><rect x="7.80" y="0.00" width="5.6" height="5.5" rx="0.5" fill="#444"/><rect x="15.60" y="0.00" width="5.6" height="5.5" rx="0.5" fill="#444"/><rect x="0.00" y="7.75" width="5.6" height="5.5" rx="0.5" fill="#444"/><rect x="7.80" y="7.75" width="5.6" height="5.5" rx="0.5" fill="#444"/><rect x="15.60" y="7.75" width="5.6" height="5.5" rx="0.5" fill="#444"/><rect x="0.00" y="15.50" width="5.6" height="5.5" rx="0.5" fill="#444"/><rect x="7.80" y="15.50" width="5.6" height="5.5" rx="0.5" fill="#444"/><rect x="15.60" y="15.50" width="5.6" height="5.5" rx="0.5" fill="#444"/></svg><svg width="14.00" height="24.50" viewBox="0 0 1024 1792" style="position:absolute;left:1851.0px;top:162.3px"><path fill="#444" fill-rule="evenodd" d="M1024 704q0 26-19 45l-448 448q-19 19-45 19t-45-19l-448-448q-19-19-19-45t19-45 45-19h896q26 0 45 19t19 45z"/></svg><svg width="21.5" height="23.2" viewBox="0 0 21.5 23.2" style="position:absolute;left:1908.5px;top:158.9px"><path fill="#444" fill-rule="evenodd" d="M0 17.6H21.5V23.2H0ZM16.8 19.4V20.8H19.6V19.4Z"/><path fill="#444" d="M6.2 0.2H19.4V13.4L15.4 9.4L11.9 12.9L6.9 7.9L10.3 4.4Z"/><path fill="#444" d="M6.0 8.9L10.9 13.8L8.7 16L3.8 11.1Z"/></svg><svg width="14.00" height="24.50" viewBox="0 0 1024 1792" style="position:absolute;left:1937.7px;top:162.3px"><path fill="#444" fill-rule="evenodd" d="M1024 704q0 26-19 45l-448 448q-19 19-45 19t-45-19l-448-448q-19-19-19-45t19-45 45-19h896q26 0 45 19t19 45z"/></svg><div class="gbtn" style="left:1983px;top:144.0px;width:69px;height:57px;border-radius:6px"><svg width="22.75" height="24.50" viewBox="0 0 1664 1792" style="position:absolute;left:21px;top:12.3px;overflow:visible"><path fill="#444" fill-rule="evenodd" d="M1216 832q0-185-131.500-316.500t-316.500-131.500-316.500 131.500-131.500 316.500 131.500 316.500 316.500 131.500 316.500-131.500 131.500-316.500zM1728 1664q0 52-38 90t-90 38q-54 0-90-38l-343-342q-179 124-399 124-143 0-273.500-55.500t-225-150-150-225-55.500-273.500 55.500-273.500 150-225 225-150 273.500-55.500 273.500 55.500 225 150 150 225 55.500 273.500q0 220-124 399l343 343q37 37 37 90z"/></svg></div>
<div id="tbl" style="position:absolute;left:27px;top:219px;width:2024px;height:895px;overflow:hidden;background:#fff;font-size:24.5px;color:#333">
<div style="position:absolute;left:0;top:73.30px;width:2024px;height:82.25px;background:#e9ecef"></div><div style="position:absolute;left:0;top:155.55px;width:2024px;height:82.25px;background:#fff"></div><div style="position:absolute;left:0;top:237.80px;width:2024px;height:82.25px;background:#f9f9f9"></div><div style="position:absolute;left:0;top:320.05px;width:2024px;height:82.25px;background:#fff"></div><div style="position:absolute;left:0;top:402.30px;width:2024px;height:82.25px;background:#f9f9f9"></div><div style="position:absolute;left:0;top:484.55px;width:2024px;height:82.25px;background:#fff"></div><div style="position:absolute;left:0;top:566.80px;width:2024px;height:82.25px;background:#f9f9f9"></div><div style="position:absolute;left:0;top:649.05px;width:2024px;height:82.25px;background:#fff"></div><div style="position:absolute;left:0;top:731.30px;width:2024px;height:82.25px;background:#f9f9f9"></div><div style="position:absolute;left:0;top:813.55px;width:2024px;height:82.25px;background:#fff"></div>
<div style="position:absolute;left:0;top:0;width:1491px;height:2px;background:#f4f4f4"></div><div style="position:absolute;left:0;top:72.00px;width:2024px;height:2px;background:#dbdbdb"></div><div style="position:absolute;left:0;top:153.55px;width:2024px;height:2px;background:#f4f4f4"></div><div style="position:absolute;left:0;top:235.80px;width:2024px;height:2px;background:#f4f4f4"></div><div style="position:absolute;left:0;top:318.05px;width:2024px;height:2px;background:#f4f4f4"></div><div style="position:absolute;left:0;top:400.30px;width:2024px;height:2px;background:#f4f4f4"></div><div style="position:absolute;left:0;top:482.55px;width:2024px;height:2px;background:#f4f4f4"></div><div style="position:absolute;left:0;top:564.80px;width:2024px;height:2px;background:#f4f4f4"></div><div style="position:absolute;left:0;top:647.05px;width:2024px;height:2px;background:#f4f4f4"></div><div style="position:absolute;left:0;top:729.30px;width:2024px;height:2px;background:#f4f4f4"></div><div style="position:absolute;left:0;top:811.55px;width:2024px;height:2px;background:#f4f4f4"></div><div style="position:absolute;left:0;top:893.80px;width:2024px;height:2px;background:#f4f4f4"></div>
<div style="position:absolute;left:0.0px;top:0;width:2px;height:895px;background:#f4f4f4"></div><div style="position:absolute;left:76.0px;top:0;width:2px;height:895px;background:#f4f4f4"></div><div style="position:absolute;left:157.0px;top:0;width:2px;height:895px;background:#f4f4f4"></div><div style="position:absolute;left:239.0px;top:0;width:2px;height:895px;background:#f4f4f4"></div><div style="position:absolute;left:374.0px;top:0;width:2px;height:895px;background:#f4f4f4"></div><div style="position:absolute;left:661.0px;top:0;width:2px;height:895px;background:#f4f4f4"></div><div style="position:absolute;left:948.0px;top:0;width:2px;height:895px;background:#f4f4f4"></div><div style="position:absolute;left:1104.0px;top:0;width:2px;height:895px;background:#f4f4f4"></div><div style="position:absolute;left:1341.0px;top:0;width:2px;height:895px;background:#f4f4f4"></div>
<div class="th" style="left:77px;top:17.0px;width:81px">ID</div><div class="th" style="left:158px;top:17.0px;width:82px">Pid</div><div class="th" style="left:240px;top:17.0px;width:135px">是否封禁</div><div class="th" style="left:375px;top:17.0px;width:287px">用户名</div><div class="th" style="left:662px;top:17.0px;width:287px">昵称</div><div class="th" style="left:949px;top:17.0px;width:156px">余额</div><div class="th" style="left:1105px;top:17.0px;width:237px">加入IP</div><div class="th" style="left:1342px;top:17.0px;width:284px">加入时间</div><span style="position:absolute;left:28.0px;top:23.0px;width:21px;height:21px;border-radius:4.5px;background:#fff;border:2px solid #767676"></span>
<span style="position:absolute;left:28.0px;top:100.0px;width:21px;height:21px;border-radius:4px;background:#0075ff"><svg width="21" height="21" viewBox="0 0 21 21"><path d="M4.4 11.2L8.6 15.2L16.6 5.6" fill="none" stroke="#fff" stroke-width="3.2"/></svg></span><div class="td" style="left:77px;top:93.4px;width:81px">67</div><div class="td" style="left:158px;top:93.4px;width:82px">58</div><div class="td" style="left:375px;top:93.4px;width:287px">13333343433</div><div class="td" style="left:662px;top:93.4px;width:287px">133****3433</div><div class="td" style="left:949px;top:93.4px;width:156px">0.00</div><div class="td" style="left:1105px;top:93.4px;width:237px">127.0.0.1</div><div class="td" style="left:1370px;top:93.4px;width:200px;text-align:left">2024-05-05</div><span style="position:absolute;left:279.8px;top:94.9px;width:53.4px;height:33px;border-radius:17px;background:#d1d5df"><i style="position:absolute;left:3.8px;top:3.5px;width:26.2px;height:26.2px;border-radius:50%;background:#e9ecef"></i></span>
<span style="position:absolute;left:28.0px;top:182.3px;width:21px;height:21px;border-radius:4.5px;background:#fff;border:2px solid #767676"></span><div class="td" style="left:77px;top:176.2px;width:81px">66</div><div class="td" style="left:158px;top:176.2px;width:82px">58</div><div class="td" style="left:375px;top:176.2px;width:287px">11111111111</div><div class="td" style="left:662px;top:176.2px;width:287px">11111111111</div><div class="td" style="left:949px;top:176.2px;width:156px">0.00</div><div class="td" style="left:1105px;top:176.2px;width:237px">209.14.69.31</div><div class="td" style="left:1370px;top:176.2px;width:200px;text-align:left">2024-01-23</div><span style="position:absolute;left:279.8px;top:177.2px;width:53.4px;height:33px;border-radius:17px;background:#d1d5df"><i style="position:absolute;left:3.8px;top:3.5px;width:26.2px;height:26.2px;border-radius:50%;background:#fff"></i></span>
<span style="position:absolute;left:28.0px;top:264.7px;width:21px;height:21px;border-radius:4.5px;background:#fff;border:2px solid #767676"></span><div class="td" style="left:77px;top:258.5px;width:81px">65</div><div class="td" style="left:158px;top:258.5px;width:82px">58</div><div class="td" style="left:375px;top:258.5px;width:287px">hjjfghh@136.com</div><div class="td" style="left:662px;top:258.5px;width:287px">hjjfghh@136.com</div><div class="td" style="left:949px;top:258.5px;width:156px">0.00</div><div class="td" style="left:1105px;top:258.5px;width:237px">209.14.69.31</div><div class="td" style="left:1370px;top:258.5px;width:200px;text-align:left">2024-01-23</div><span style="position:absolute;left:279.8px;top:259.5px;width:53.4px;height:33px;border-radius:17px;background:#d1d5df"><i style="position:absolute;left:3.8px;top:3.5px;width:26.2px;height:26.2px;border-radius:50%;background:#f9f9f9"></i></span>
<span style="position:absolute;left:28.0px;top:347.0px;width:21px;height:21px;border-radius:4.5px;background:#fff;border:2px solid #767676"></span><div class="td" style="left:77px;top:340.8px;width:81px">64</div><div class="td" style="left:158px;top:340.8px;width:82px">58</div><div class="td" style="left:949px;top:340.8px;width:156px">200.00</div><div class="td" style="left:1105px;top:340.8px;width:237px">139.180.211.247</div><div class="td" style="left:1370px;top:340.8px;width:200px;text-align:left">2024-01-23</div><i style="position:absolute;left:529px;top:368.5px;width:22px;height:5px;border-bottom:2.6px solid #2a2a2a;border-radius:0 0 11px 11px/0 0 4px 4px"></i><i style="position:absolute;left:566px;top:371.0px;width:2.5px;height:3px;background:#333"></i><i style="position:absolute;left:574px;top:371.0px;width:2.5px;height:3px;background:#333"></i><i style="position:absolute;left:815px;top:368.5px;width:22px;height:5px;border-bottom:2.6px solid #2a2a2a;border-radius:0 0 11px 11px/0 0 4px 4px"></i><i style="position:absolute;left:852px;top:371.0px;width:2.5px;height:3px;background:#333"></i><i style="position:absolute;left:860px;top:371.0px;width:2.5px;height:3px;background:#333"></i><i style="position:absolute;left:921px;top:358.5px;width:1px;height:10px;background:#ccc"></i><span style="position:absolute;left:279.8px;top:341.9px;width:53.4px;height:33px;border-radius:17px;background:#d1d5df"><i style="position:absolute;left:3.8px;top:3.5px;width:26.2px;height:26.2px;border-radius:50%;background:#fff"></i></span>
<span style="position:absolute;left:28.0px;top:429.3px;width:21px;height:21px;border-radius:4.5px;background:#fff;border:2px solid #767676"></span><div class="td" style="left:77px;top:423.0px;width:81px">63</div><div class="td" style="left:158px;top:423.0px;width:82px">1</div><div class="td" style="left:375px;top:423.0px;width:287px">12312311111</div><div class="td" style="left:662px;top:423.0px;width:287px">12312311111</div><div class="td" style="left:949px;top:423.0px;width:156px">0.00</div><div class="td" style="left:1105px;top:423.0px;width:237px">47.57.188.134</div><div class="td" style="left:1370px;top:423.0px;width:200px;text-align:left">2024-01-13</div><span style="position:absolute;left:279.8px;top:424.2px;width:53.4px;height:33px;border-radius:17px;background:#d1d5df"><i style="position:absolute;left:3.8px;top:3.5px;width:26.2px;height:26.2px;border-radius:50%;background:#f9f9f9"></i></span>
<span style="position:absolute;left:28.0px;top:511.7px;width:21px;height:21px;border-radius:4.5px;background:#fff;border:2px solid #767676"></span><div class="td" style="left:77px;top:505.3px;width:81px">62</div><div class="td" style="left:158px;top:505.3px;width:82px">58</div><div class="td" style="left:375px;top:505.3px;width:287px">668888899999</div><div class="td" style="left:662px;top:505.3px;width:287px">668888899999</div><div class="td" style="left:949px;top:505.3px;width:156px">10000.00</div><div class="td" style="left:1105px;top:505.3px;width:237px">13.112.229.58</div><div class="td" style="left:1370px;top:505.3px;width:200px;text-align:left">2023-08-09</div><span style="position:absolute;left:279.8px;top:506.5px;width:53.4px;height:33px;border-radius:17px;background:#d1d5df"><i style="position:absolute;left:3.8px;top:3.5px;width:26.2px;height:26.2px;border-radius:50%;background:#fff"></i></span>
<span style="position:absolute;left:28.0px;top:594.0px;width:21px;height:21px;border-radius:4.5px;background:#fff;border:2px solid #767676"></span><div class="td" style="left:77px;top:587.6px;width:81px">61</div><div class="td" style="left:158px;top:587.6px;width:82px">58</div><div class="td" style="left:375px;top:587.6px;width:287px">6688888899999</div><div class="td" style="left:662px;top:587.6px;width:287px">6688888899999</div><div class="td" style="left:949px;top:587.6px;width:156px">0.00</div><div class="td" style="left:1105px;top:587.6px;width:237px">13.112.229.58</div><div class="td" style="left:1370px;top:587.6px;width:200px;text-align:left">2023-08-09</div><span style="position:absolute;left:279.8px;top:588.8px;width:53.4px;height:33px;border-radius:17px;background:#d1d5df"><i style="position:absolute;left:3.8px;top:3.5px;width:26.2px;height:26.2px;border-radius:50%;background:#f9f9f9"></i></span>
<span style="position:absolute;left:28.0px;top:676.3px;width:21px;height:21px;border-radius:4.5px;background:#fff;border:2px solid #767676"></span><div class="td" style="left:77px;top:669.8px;width:81px">60</div><div class="td" style="left:158px;top:669.8px;width:82px">58</div><div class="td" style="left:375px;top:669.8px;width:287px">558888899999</div><div class="td" style="left:662px;top:669.8px;width:287px">558888899999</div><div class="td" style="left:949px;top:669.8px;width:156px">0.00</div><div class="td" style="left:1105px;top:669.8px;width:237px">13.112.229.58</div><div class="td" style="left:1370px;top:669.8px;width:200px;text-align:left">2023-08-09</div><span style="position:absolute;left:279.8px;top:671.1px;width:53.4px;height:33px;border-radius:17px;background:#d1d5df"><i style="position:absolute;left:3.8px;top:3.5px;width:26.2px;height:26.2px;border-radius:50%;background:#fff"></i></span>
<span style="position:absolute;left:28.0px;top:758.7px;width:21px;height:21px;border-radius:4.5px;background:#fff;border:2px solid #767676"></span><div class="td" style="left:77px;top:752.1px;width:81px">59</div><div class="td" style="left:158px;top:752.1px;width:82px">58</div><div class="td" style="left:375px;top:752.1px;width:287px">553333366666</div><div class="td" style="left:662px;top:752.1px;width:287px">553333366666</div><div class="td" style="left:949px;top:752.1px;width:156px">0.00</div><div class="td" style="left:1105px;top:752.1px;width:237px">13.112.229.58</div><div class="td" style="left:1370px;top:752.1px;width:200px;text-align:left">2023-08-09</div><span style="position:absolute;left:279.8px;top:753.4px;width:53.4px;height:33px;border-radius:17px;background:#d1d5df"><i style="position:absolute;left:3.8px;top:3.5px;width:26.2px;height:26.2px;border-radius:50%;background:#f9f9f9"></i></span>
<span style="position:absolute;left:28.0px;top:841.0px;width:21px;height:21px;border-radius:4.5px;background:#fff;border:2px solid #767676"></span><div class="td" style="left:77px;top:834.4px;width:81px">58</div><div class="td" style="left:158px;top:834.4px;width:82px">15</div><div class="td" style="left:375px;top:834.4px;width:287px">556666699999</div><div class="td" style="left:662px;top:834.4px;width:287px">556666699999</div><div class="td" style="left:949px;top:834.4px;width:156px">30.00</div><div class="td" style="left:1105px;top:834.4px;width:237px">13.112.229.58</div><div class="td" style="left:1370px;top:834.4px;width:200px;text-align:left">2023-08-09</div><span style="position:absolute;left:279.8px;top:835.8px;width:53.4px;height:33px;border-radius:17px;background:#d1d5df"><i style="position:absolute;left:3.8px;top:3.5px;width:26.2px;height:26.2px;border-radius:50%;background:#fff"></i></span>
</div>
<div style="position:absolute;left:27px;top:1113.1px;width:2025px;height:30.6px;background:#f1f1f1"><div style="position:absolute;left:29px;top:3.9px;width:1419px;height:24.9px;background:#c1c1c1"></div><svg width="9" height="14" viewBox="0 0 9 14" style="position:absolute;left:9.5px;top:9.5px"><path d="M8.5 0.5V13.5L1 7Z" fill="#a3a3a3"/></svg><svg width="9" height="14" viewBox="0 0 9 14" style="position:absolute;left:2006.5px;top:9.8px"><path d="M0.5 0.5V13.5L8 7Z" fill="#505050"/></svg></div>
<div id="fix" style="position:absolute;left:1518px;top:221px;width:532.5px;height:895.75px;background:#fff;box-shadow:0 0 12px rgba(0,0,0,.08);font-size:21px;overflow:hidden">
<div style="position:absolute;left:0;top:71.30px;width:533px;height:82.25px;background:#e9ecef"></div><div style="position:absolute;left:0;top:153.55px;width:533px;height:82.25px;background:#fff"></div><div style="position:absolute;left:0;top:235.80px;width:533px;height:82.25px;background:#f9f9f9"></div><div style="position:absolute;left:0;top:318.05px;width:533px;height:82.25px;background:#fff"></div><div style="position:absolute;left:0;top:400.30px;width:533px;height:82.25px;background:#f9f9f9"></div><div style="position:absolute;left:0;top:482.55px;width:533px;height:82.25px;background:#fff"></div><div style="position:absolute;left:0;top:564.80px;width:533px;height:82.25px;background:#f9f9f9"></div><div style="position:absolute;left:0;top:647.05px;width:533px;height:82.25px;background:#fff"></div><div style="position:absolute;left:0;top:729.30px;width:533px;height:82.25px;background:#f9f9f9"></div><div style="position:absolute;left:0;top:811.55px;width:533px;height:82.25px;background:#fff"></div><div style="position:absolute;left:0;top:70.00px;width:534px;height:2px;background:#dbdbdb"></div><div style="position:absolute;left:0;top:151.55px;width:532px;height:2px;background:#f4f4f4"></div><div style="position:absolute;left:0;top:233.80px;width:532px;height:2px;background:#f4f4f4"></div><div style="position:absolute;left:0;top:316.05px;width:532px;height:2px;background:#f4f4f4"></div><div style="position:absolute;left:0;top:398.30px;width:532px;height:2px;background:#f4f4f4"></div><div style="position:absolute;left:0;top:480.55px;width:532px;height:2px;background:#f4f4f4"></div><div style="position:absolute;left:0;top:562.80px;width:532px;height:2px;background:#f4f4f4"></div><div style="position:absolute;left:0;top:645.05px;width:532px;height:2px;background:#f4f4f4"></div><div style="position:absolute;left:0;top:727.30px;width:532px;height:2px;background:#f4f4f4"></div><div style="position:absolute;left:0;top:809.55px;width:532px;height:2px;background:#f4f4f4"></div><div style="position:absolute;left:0;top:891.80px;width:532px;height:2px;background:#f4f4f4"></div><div class="th" style="left:0;top:15.0px;width:532px;font-size:24.5px">操作</div>
<span class="rb" style="left:28.0px;top:93.0px;width:90.0px;background:#1688f1"><svg width="21.00" height="21.00" viewBox="0 0 1792 1792" style="position:absolute;left:10px;top:7.5px"><path fill="#fff" fill-rule="evenodd" d="M1671 566q0 40-28 68l-724 724-136 136q-28 28-68 28t-68-28l-136-136-362-362q-28-28-28-68t28-68l136-136q28-28 68-28t68 28l294 295 656-657q28-28 68-28t68 28l136 136q28 28 28 68z"/></svg><span style="position:absolute;left:36px">回收</span></span><span class="rb" style="left:124.0px;top:93.0px;width:84.0px;background:#444c69">上下分</span><span class="rb" style="left:215.0px;top:93.0px;width:63.0px;background:#1688f1">下级</span><span class="rb" style="left:285.0px;top:93.0px;width:105.0px;background:#1688f1">提现信息</span><span class="rb" style="left:397.0px;top:93.0px;width:63.0px;background:#1688f1">详情</span><span class="rb" style="left:467.0px;top:93.0px;width:39.0px;background:#18bc9c"><svg width="18.00" height="21.00" viewBox="0 0 1536 1792" style="position:absolute;left:9.5px;top:7.5px"><path fill="#fff" fill-rule="evenodd" d="M363 1536l91-91-235-235-91 91v107h128v128h107zM886 608q0-22-22-22-10 0-17 7l-542 542q-7 7-7 17 0 22 22 22 10 0 17-7l542-542q7-7 7-17zM832 416l416 416-832 832h-416v-416zM1515 512q0 53-37 90l-166 166-416-416 166-165q36-38 90-38 53 0 91 38l235 234q37 39 37 91z"/></svg></span>
<span class="rb" style="left:28.0px;top:175.2px;width:90.0px;background:#1688f1"><svg width="21.00" height="21.00" viewBox="0 0 1792 1792" style="position:absolute;left:10px;top:7.5px"><path fill="#fff" fill-rule="evenodd" d="M1671 566q0 40-28 68l-724 724-136 136q-28 28-68 28t-68-28l-136-136-362-362q-28-28-28-68t28-68l136-136q28-28 68-28t68 28l294 295 656-657q28-28 68-28t68 28l136 136q28 28 28 68z"/></svg><span style="position:absolute;left:36px">回收</span></span><span class="rb" style="left:124.0px;top:175.2px;width:84.0px;background:#444c69">上下分</span><span class="rb" style="left:215.0px;top:175.2px;width:63.0px;background:#1688f1">下级</span><span class="rb" style="left:285.0px;top:175.2px;width:105.0px;background:#1688f1">提现信息</span><span class="rb" style="left:397.0px;top:175.2px;width:63.0px;background:#1688f1">详情</span><span class="rb" style="left:467.0px;top:175.2px;width:39.0px;background:#18bc9c"><svg width="18.00" height="21.00" viewBox="0 0 1536 1792" style="position:absolute;left:9.5px;top:7.5px"><path fill="#fff" fill-rule="evenodd" d="M363 1536l91-91-235-235-91 91v107h128v128h107zM886 608q0-22-22-22-10 0-17 7l-542 542q-7 7-7 17 0 22 22 22 10 0 17-7l542-542q7-7 7-17zM832 416l416 416-832 832h-416v-416zM1515 512q0 53-37 90l-166 166-416-416 166-165q36-38 90-38 53 0 91 38l235 234q37 39 37 91z"/></svg></span>
<span class="rb" style="left:28.0px;top:257.4px;width:90.0px;background:#1688f1"><svg width="21.00" height="21.00" viewBox="0 0 1792 1792" style="position:absolute;left:10px;top:7.5px"><path fill="#fff" fill-rule="evenodd" d="M1671 566q0 40-28 68l-724 724-136 136q-28 28-68 28t-68-28l-136-136-362-362q-28-28-28-68t28-68l136-136q28-28 68-28t68 28l294 295 656-657q28-28 68-28t68 28l136 136q28 28 28 68z"/></svg><span style="position:absolute;left:36px">回收</span></span><span class="rb" style="left:124.0px;top:257.4px;width:84.0px;background:#444c69">上下分</span><span class="rb" style="left:215.0px;top:257.4px;width:63.0px;background:#1688f1">下级</span><span class="rb" style="left:285.0px;top:257.4px;width:105.0px;background:#1688f1">提现信息</span><span class="rb" style="left:397.0px;top:257.4px;width:63.0px;background:#1688f1">详情</span><span class="rb" style="left:467.0px;top:257.4px;width:39.0px;background:#18bc9c"><svg width="18.00" height="21.00" viewBox="0 0 1536 1792" style="position:absolute;left:9.5px;top:7.5px"><path fill="#fff" fill-rule="evenodd" d="M363 1536l91-91-235-235-91 91v107h128v128h107zM886 608q0-22-22-22-10 0-17 7l-542 542q-7 7-7 17 0 22 22 22 10 0 17-7l542-542q7-7 7-17zM832 416l416 416-832 832h-416v-416zM1515 512q0 53-37 90l-166 166-416-416 166-165q36-38 90-38 53 0 91 38l235 234q37 39 37 91z"/></svg></span>
<span class="rb" style="left:28.0px;top:339.7px;width:90.0px;background:#1688f1"><svg width="21.00" height="21.00" viewBox="0 0 1792 1792" style="position:absolute;left:10px;top:7.5px"><path fill="#fff" fill-rule="evenodd" d="M1671 566q0 40-28 68l-724 724-136 136q-28 28-68 28t-68-28l-136-136-362-362q-28-28-28-68t28-68l136-136q28-28 68-28t68 28l294 295 656-657q28-28 68-28t68 28l136 136q28 28 28 68z"/></svg><span style="position:absolute;left:36px">回收</span></span><span class="rb" style="left:124.0px;top:339.7px;width:84.0px;background:#444c69">上下分</span><span class="rb" style="left:215.0px;top:339.7px;width:63.0px;background:#1688f1">下级</span><span class="rb" style="left:285.0px;top:339.7px;width:105.0px;background:#1688f1">提现信息</span><span class="rb" style="left:397.0px;top:339.7px;width:63.0px;background:#1688f1">详情</span><span class="rb" style="left:467.0px;top:339.7px;width:39.0px;background:#18bc9c"><svg width="18.00" height="21.00" viewBox="0 0 1536 1792" style="position:absolute;left:9.5px;top:7.5px"><path fill="#fff" fill-rule="evenodd" d="M363 1536l91-91-235-235-91 91v107h128v128h107zM886 608q0-22-22-22-10 0-17 7l-542 542q-7 7-7 17 0 22 22 22 10 0 17-7l542-542q7-7 7-17zM832 416l416 416-832 832h-416v-416zM1515 512q0 53-37 90l-166 166-416-416 166-165q36-38 90-38 53 0 91 38l235 234q37 39 37 91z"/></svg></span>
<span class="rb" style="left:28.0px;top:421.9px;width:90.0px;background:#1688f1"><svg width="21.00" height="21.00" viewBox="0 0 1792 1792" style="position:absolute;left:10px;top:7.5px"><path fill="#fff" fill-rule="evenodd" d="M1671 566q0 40-28 68l-724 724-136 136q-28 28-68 28t-68-28l-136-136-362-362q-28-28-28-68t28-68l136-136q28-28 68-28t68 28l294 295 656-657q28-28 68-28t68 28l136 136q28 28 28 68z"/></svg><span style="position:absolute;left:36px">回收</span></span><span class="rb" style="left:124.0px;top:421.9px;width:84.0px;background:#444c69">上下分</span><span class="rb" style="left:215.0px;top:421.9px;width:63.0px;background:#1688f1">下级</span><span class="rb" style="left:285.0px;top:421.9px;width:105.0px;background:#1688f1">提现信息</span><span class="rb" style="left:397.0px;top:421.9px;width:63.0px;background:#1688f1">详情</span><span class="rb" style="left:467.0px;top:421.9px;width:39.0px;background:#18bc9c"><svg width="18.00" height="21.00" viewBox="0 0 1536 1792" style="position:absolute;left:9.5px;top:7.5px"><path fill="#fff" fill-rule="evenodd" d="M363 1536l91-91-235-235-91 91v107h128v128h107zM886 608q0-22-22-22-10 0-17 7l-542 542q-7 7-7 17 0 22 22 22 10 0 17-7l542-542q7-7 7-17zM832 416l416 416-832 832h-416v-416zM1515 512q0 53-37 90l-166 166-416-416 166-165q36-38 90-38 53 0 91 38l235 234q37 39 37 91z"/></svg></span>
<span class="rb" style="left:28.0px;top:504.2px;width:90.0px;background:#1688f1"><svg width="21.00" height="21.00" viewBox="0 0 1792 1792" style="position:absolute;left:10px;top:7.5px"><path fill="#fff" fill-rule="evenodd" d="M1671 566q0 40-28 68l-724 724-136 136q-28 28-68 28t-68-28l-136-136-362-362q-28-28-28-68t28-68l136-136q28-28 68-28t68 28l294 295 656-657q28-28 68-28t68 28l136 136q28 28 28 68z"/></svg><span style="position:absolute;left:36px">回收</span></span><span class="rb" style="left:124.0px;top:504.2px;width:84.0px;background:#444c69">上下分</span><span class="rb" style="left:215.0px;top:504.2px;width:63.0px;background:#1688f1">下级</span><span class="rb" style="left:285.0px;top:504.2px;width:105.0px;background:#1688f1">提现信息</span><span class="rb" style="left:397.0px;top:504.2px;width:63.0px;background:#1688f1">详情</span><span class="rb" style="left:467.0px;top:504.2px;width:39.0px;background:#18bc9c"><svg width="18.00" height="21.00" viewBox="0 0 1536 1792" style="position:absolute;left:9.5px;top:7.5px"><path fill="#fff" fill-rule="evenodd" d="M363 1536l91-91-235-235-91 91v107h128v128h107zM886 608q0-22-22-22-10 0-17 7l-542 542q-7 7-7 17 0 22 22 22 10 0 17-7l542-542q7-7 7-17zM832 416l416 416-832 832h-416v-416zM1515 512q0 53-37 90l-166 166-416-416 166-165q36-38 90-38 53 0 91 38l235 234q37 39 37 91z"/></svg></span>
<span class="rb" style="left:28.0px;top:586.4px;width:90.0px;background:#1688f1"><svg width="21.00" height="21.00" viewBox="0 0 1792 1792" style="position:absolute;left:10px;top:7.5px"><path fill="#fff" fill-rule="evenodd" d="M1671 566q0 40-28 68l-724 724-136 136q-28 28-68 28t-68-28l-136-136-362-362q-28-28-28-68t28-68l136-136q28-28 68-28t68 28l294 295 656-657q28-28 68-28t68 28l136 136q28 28 28 68z"/></svg><span style="position:absolute;left:36px">回收</span></span><span class="rb" style="left:124.0px;top:586.4px;width:84.0px;background:#444c69">上下分</span><span class="rb" style="left:215.0px;top:586.4px;width:63.0px;background:#1688f1">下级</span><span class="rb" style="left:285.0px;top:586.4px;width:105.0px;background:#1688f1">提现信息</span><span class="rb" style="left:397.0px;top:586.4px;width:63.0px;background:#1688f1">详情</span><span class="rb" style="left:467.0px;top:586.4px;width:39.0px;background:#18bc9c"><svg width="18.00" height="21.00" viewBox="0 0 1536 1792" style="position:absolute;left:9.5px;top:7.5px"><path fill="#fff" fill-rule="evenodd" d="M363 1536l91-91-235-235-91 91v107h128v128h107zM886 608q0-22-22-22-10 0-17 7l-542 542q-7 7-7 17 0 22 22 22 10 0 17-7l542-542q7-7 7-17zM832 416l416 416-832 832h-416v-416zM1515 512q0 53-37 90l-166 166-416-416 166-165q36-38 90-38 53 0 91 38l235 234q37 39 37 91z"/></svg></span>
<span class="rb" style="left:28.0px;top:668.7px;width:90.0px;background:#1688f1"><svg width="21.00" height="21.00" viewBox="0 0 1792 1792" style="position:absolute;left:10px;top:7.5px"><path fill="#fff" fill-rule="evenodd" d="M1671 566q0 40-28 68l-724 724-136 136q-28 28-68 28t-68-28l-136-136-362-362q-28-28-28-68t28-68l136-136q28-28 68-28t68 28l294 295 656-657q28-28 68-28t68 28l136 136q28 28 28 68z"/></svg><span style="position:absolute;left:36px">回收</span></span><span class="rb" style="left:124.0px;top:668.7px;width:84.0px;background:#444c69">上下分</span><span class="rb" style="left:215.0px;top:668.7px;width:63.0px;background:#1688f1">下级</span><span class="rb" style="left:285.0px;top:668.7px;width:105.0px;background:#1688f1">提现信息</span><span class="rb" style="left:397.0px;top:668.7px;width:63.0px;background:#1688f1">详情</span><span class="rb" style="left:467.0px;top:668.7px;width:39.0px;background:#18bc9c"><svg width="18.00" height="21.00" viewBox="0 0 1536 1792" style="position:absolute;left:9.5px;top:7.5px"><path fill="#fff" fill-rule="evenodd" d="M363 1536l91-91-235-235-91 91v107h128v128h107zM886 608q0-22-22-22-10 0-17 7l-542 542q-7 7-7 17 0 22 22 22 10 0 17-7l542-542q7-7 7-17zM832 416l416 416-832 832h-416v-416zM1515 512q0 53-37 90l-166 166-416-416 166-165q36-38 90-38 53 0 91 38l235 234q37 39 37 91z"/></svg></span>
<span class="rb" style="left:28.0px;top:750.9px;width:90.0px;background:#1688f1"><svg width="21.00" height="21.00" viewBox="0 0 1792 1792" style="position:absolute;left:10px;top:7.5px"><path fill="#fff" fill-rule="evenodd" d="M1671 566q0 40-28 68l-724 724-136 136q-28 28-68 28t-68-28l-136-136-362-362q-28-28-28-68t28-68l136-136q28-28 68-28t68 28l294 295 656-657q28-28 68-28t68 28l136 136q28 28 28 68z"/></svg><span style="position:absolute;left:36px">回收</span></span><span class="rb" style="left:124.0px;top:750.9px;width:84.0px;background:#444c69">上下分</span><span class="rb" style="left:215.0px;top:750.9px;width:63.0px;background:#1688f1">下级</span><span class="rb" style="left:285.0px;top:750.9px;width:105.0px;background:#1688f1">提现信息</span><span class="rb" style="left:397.0px;top:750.9px;width:63.0px;background:#1688f1">详情</span><span class="rb" style="left:467.0px;top:750.9px;width:39.0px;background:#18bc9c"><svg width="18.00" height="21.00" viewBox="0 0 1536 1792" style="position:absolute;left:9.5px;top:7.5px"><path fill="#fff" fill-rule="evenodd" d="M363 1536l91-91-235-235-91 91v107h128v128h107zM886 608q0-22-22-22-10 0-17 7l-542 542q-7 7-7 17 0 22 22 22 10 0 17-7l542-542q7-7 7-17zM832 416l416 416-832 832h-416v-416zM1515 512q0 53-37 90l-166 166-416-416 166-165q36-38 90-38 53 0 91 38l235 234q37 39 37 91z"/></svg></span>
<span class="rb" style="left:28.0px;top:833.2px;width:90.0px;background:#1688f1"><svg width="21.00" height="21.00" viewBox="0 0 1792 1792" style="position:absolute;left:10px;top:7.5px"><path fill="#fff" fill-rule="evenodd" d="M1671 566q0 40-28 68l-724 724-136 136q-28 28-68 28t-68-28l-136-136-362-362q-28-28-28-68t28-68l136-136q28-28 68-28t68 28l294 295 656-657q28-28 68-28t68 28l136 136q28 28 28 68z"/></svg><span style="position:absolute;left:36px">回收</span></span><span class="rb" style="left:124.0px;top:833.2px;width:84.0px;background:#444c69">上下分</span><span class="rb" style="left:215.0px;top:833.2px;width:63.0px;background:#1688f1">下级</span><span class="rb" style="left:285.0px;top:833.2px;width:105.0px;background:#1688f1">提现信息</span><span class="rb" style="left:397.0px;top:833.2px;width:63.0px;background:#1688f1">详情</span><span class="rb" style="left:467.0px;top:833.2px;width:39.0px;background:#18bc9c"><svg width="18.00" height="21.00" viewBox="0 0 1536 1792" style="position:absolute;left:9.5px;top:7.5px"><path fill="#fff" fill-rule="evenodd" d="M363 1536l91-91-235-235-91 91v107h128v128h107zM886 608q0-22-22-22-10 0-17 7l-542 542q-7 7-7 17 0 22 22 22 10 0 17-7l542-542q7-7 7-17zM832 416l416 416-832 832h-416v-416zM1515 512q0 53-37 90l-166 166-416-416 166-165q36-38 90-38 53 0 91 38l235 234q37 39 37 91z"/></svg></span>
</div>
<div style="position:absolute;left:2050.3px;top:221px;width:1.8px;height:894px;background:#f4f4f4"></div><div style="position:absolute;left:2050.3px;top:291px;width:1.8px;height:2px;background:#dbdbdb"></div>
<div style="position:absolute;left:27px;top:1177.5px;font-size:24.5px;color:#333;white-space:nowrap;line-height:30px">显示第 1 到第 10 条记录，总共 61 条记录 每页显示</div>
<div class="gbtn" style="left:592px;top:1165px;width:91px;height:54.5px;border-radius:6px;font-size:22.75px;line-height:53px;color:#333"><span style="position:absolute;left:23px">10</span><svg width="13.00" height="22.75" viewBox="0 0 1024 1792" style="position:absolute;left:53px;top:16.3px"><path fill="#444" fill-rule="evenodd" d="M1024 1216q0 26-19 45t-45 19h-896q-26 0-45-19t-19-45 19-45l448-448q19-19 45-19t45 19l448 448q19 19 19 45z"/></svg></div>
<div style="position:absolute;left:690px;top:1177.5px;font-size:24.5px;color:#333;white-space:nowrap;line-height:30px">条记录</div>
<div style="position:absolute;left:1217.6px;top:1162px;width:637.9px;height:57.5px;background:#fafafa;border:1.5px solid #ddd;border-radius:6px 0 0 6px"></div><div style="position:absolute;left:1217.6px;top:1162px;width:117.4px;height:57.5px;line-height:60px;text-align:center;font-size:24.5px;color:#555">上一页</div><div style="position:absolute;left:1335.0px;top:1162px;width:58.5px;height:57.5px;line-height:60px;text-align:center;font-size:24.5px;background:#444c69;color:#fff">1</div><div style="position:absolute;left:1393.5px;top:1162px;width:56.1px;height:57.5px;line-height:60px;text-align:center;font-size:24.5px;color:#555;border-left:1.5px solid #ddd">2</div><div style="position:absolute;left:1449.6px;top:1162px;width:57.0px;height:57.5px;line-height:60px;text-align:center;font-size:24.5px;color:#555;border-left:1.5px solid #ddd">3</div><div style="position:absolute;left:1506.6px;top:1162px;width:57.0px;height:57.5px;line-height:60px;text-align:center;font-size:24.5px;color:#555;border-left:1.5px solid #ddd">4</div><div style="position:absolute;left:1563.6px;top:1162px;width:57.4px;height:57.5px;line-height:60px;text-align:center;font-size:24.5px;color:#555;border-left:1.5px solid #ddd">5</div><div style="position:absolute;left:1621.0px;top:1162px;width:57.5px;height:57.5px;line-height:60px;text-align:center;font-size:24.5px;color:#555;border-left:1.5px solid #ddd">6</div><div style="position:absolute;left:1678.5px;top:1162px;width:58.0px;height:57.5px;line-height:60px;text-align:center;font-size:24.5px;color:#555;border-left:1.5px solid #ddd">7</div><div style="position:absolute;left:1736.5px;top:1162px;width:119.0px;height:57.5px;line-height:60px;text-align:center;font-size:24.5px;color:#555;border-left:1.5px solid #ddd">下一页</div>
<div style="position:absolute;left:1864px;top:1162px;width:88px;height:56.6px;border:1.5px solid #ccd4e0;background:#fff"></div><div class="gbtn" style="left:1961px;top:1163px;width:91px;height:56.5px;border-radius:6px;font-size:22.75px;line-height:56px;text-align:center;color:#333">跳转</div>
</div>

<div style="position:absolute;left:2531px;top:88px;width:27px;height:1246px;background:#f1f1f1"><div style="position:absolute;left:2px;top:29px;width:25px;height:1128.5px;background:#c1c1c1"></div><svg width="15" height="9" viewBox="0 0 15 9" style="position:absolute;left:7px;top:11px"><path d="M0.5 8.5H14.5L7.5 1Z" fill="#a3a3a3"/></svg><svg width="15" height="9" viewBox="0 0 15 9" style="position:absolute;left:7px;top:1229.5px"><path d="M0.5 0.5H14.5L7.5 8Z" fill="#505050"/></svg></div>
<div style="position:absolute;left:2539.5px;top:452.5px;width:15px;height:103px;border-radius:8px;background:#d0d0d0;box-shadow:0 3px 6px rgba(0,0,0,.18)"><div style="position:absolute;left:1.5px;top:1.5px;width:12px;height:100px;border-radius:6px;background:linear-gradient(#848484 0,#848484 26%,#1fc46a 26%,#22c76c 60%,#6df07e 100%)"></div></div>
<div style="position:absolute;left:0;top:1333.6px;width:2558px;height:10px;background:linear-gradient(90deg,#ebebea 0,#ebebe8 3%,#e9f1cf 9%,#eaf3c9 13%,#eaf3c9 18%,#eff0e1 24%,#efeee2 33%,#ececE8 40%,#ecebe8 50%,#f1e8e0 56%,#f5e6da 62%,#f5e6da 76%,#efe8e2 83%,#ede9e6 100%);border-top:1.4px solid #bdbdb4"></div>

</body>
</html>
